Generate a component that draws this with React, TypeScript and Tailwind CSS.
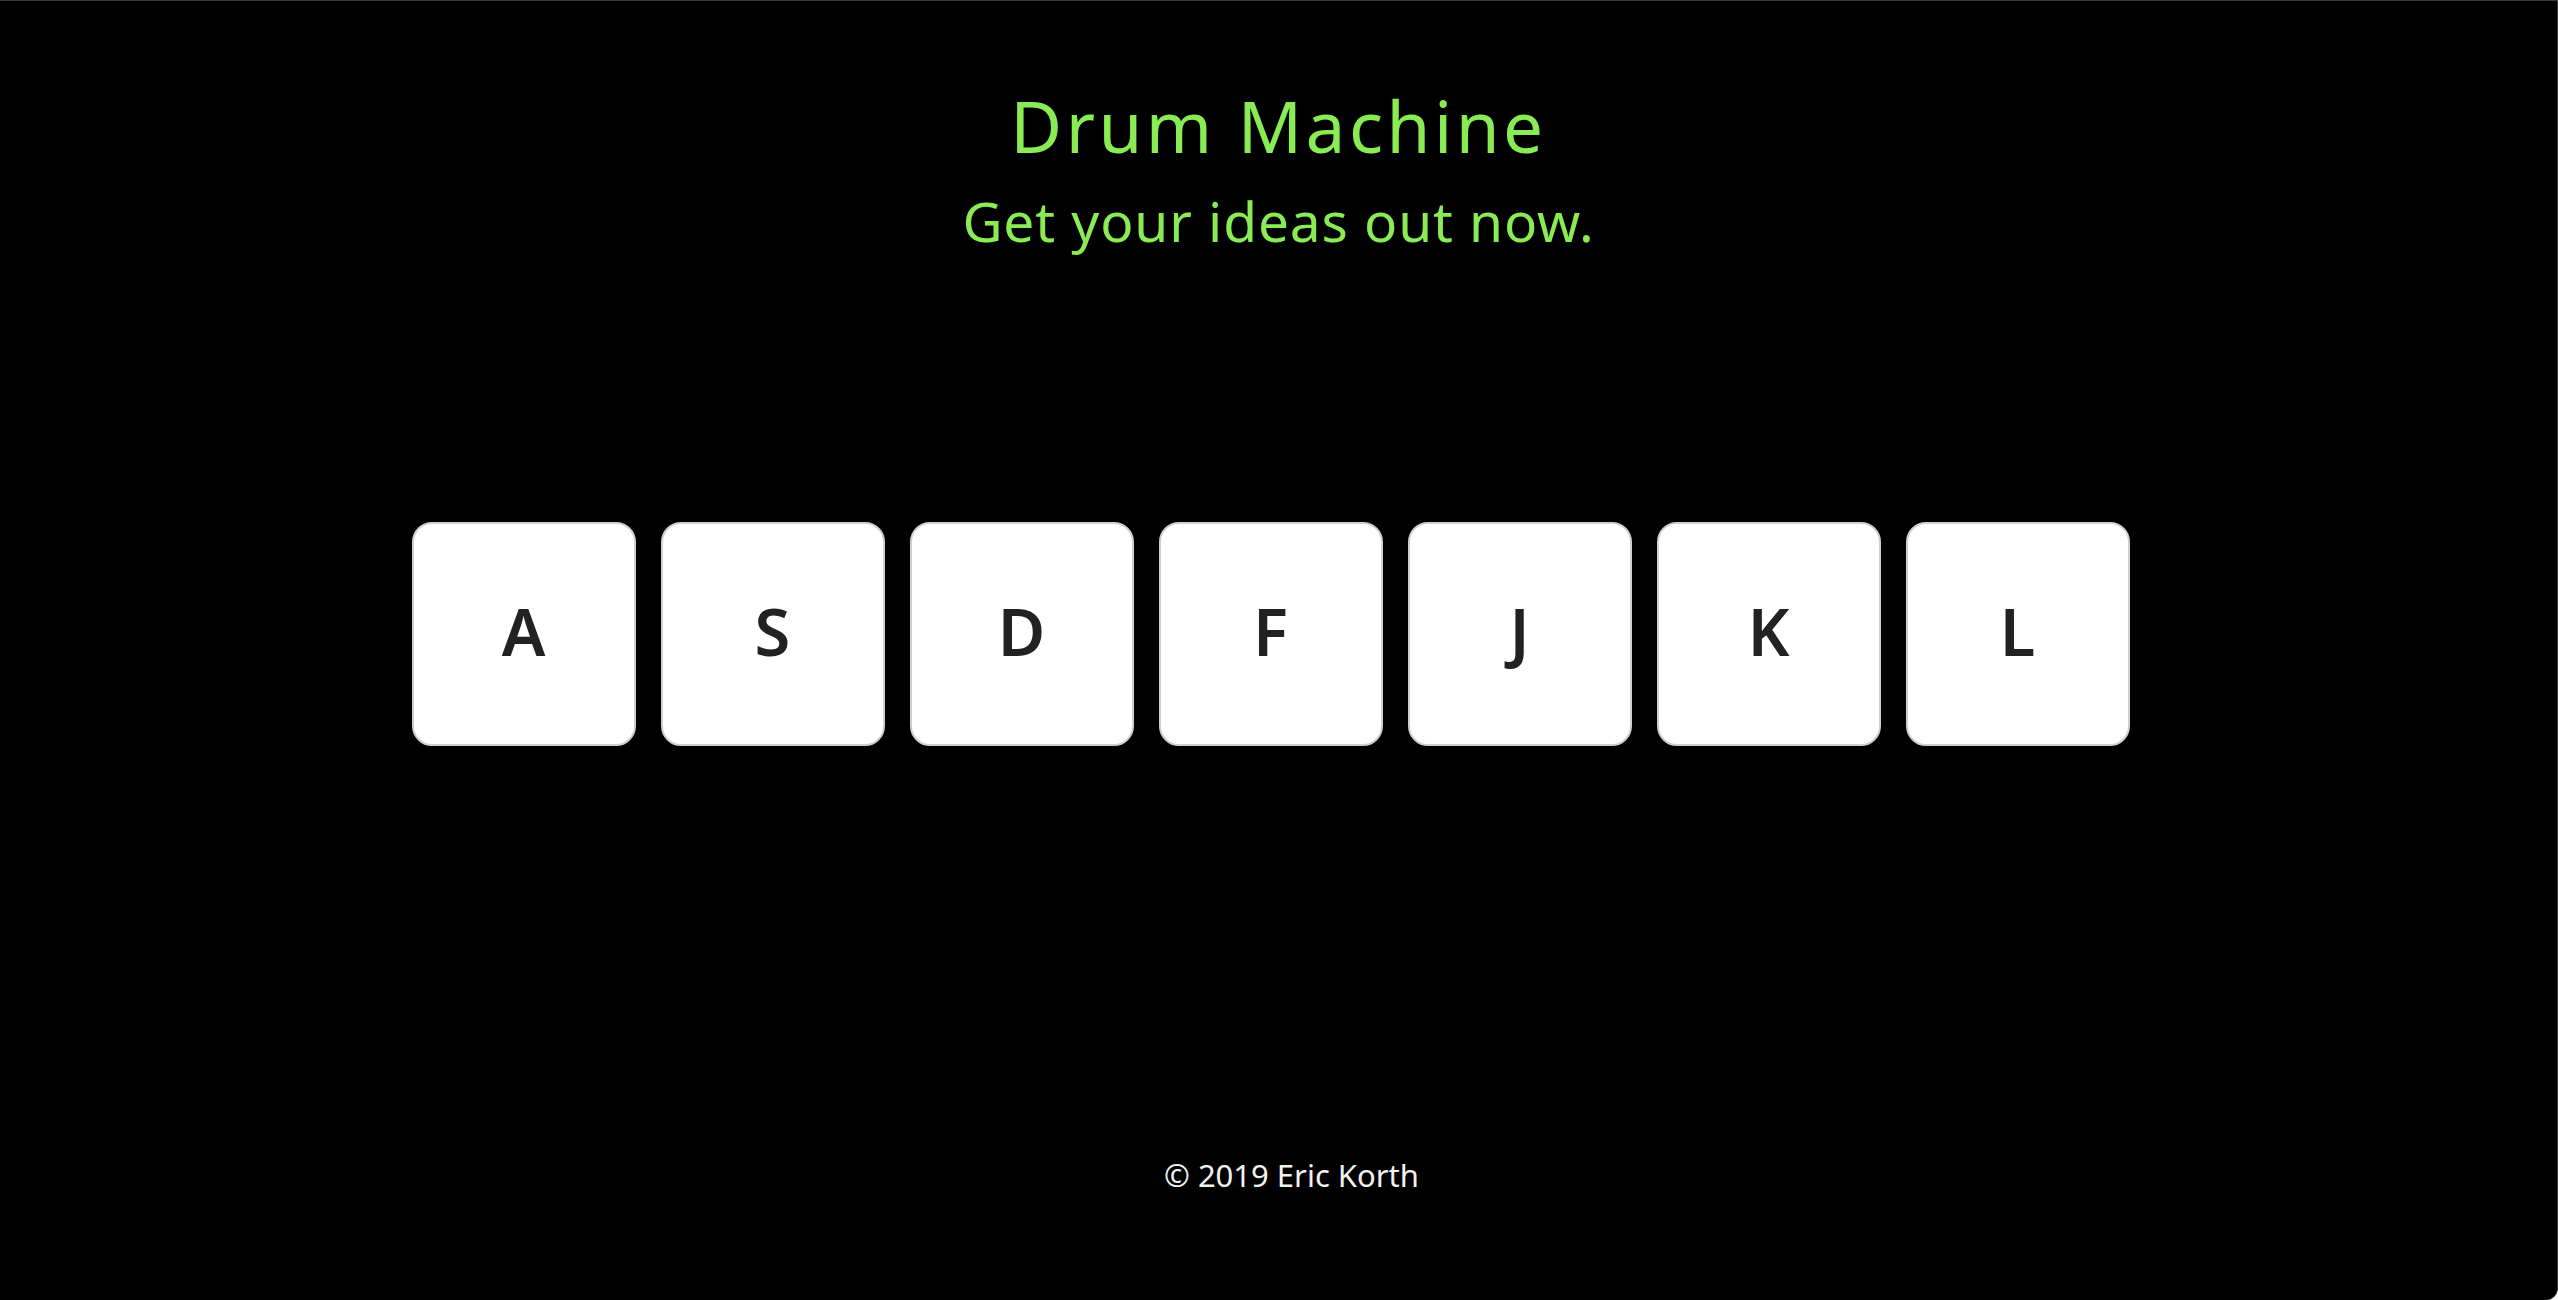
import React from "react";

const KEYS = ["A", "S", "D", "F", "J", "K", "L"];

export default function App() {
  return (
    <div
      className="w-full h-[1300px] bg-black border-t border-r border-[#3a3a3a] rounded-br-[12px] flex flex-col items-center"
      style={{ fontFamily: '"Noto Sans", "Open Sans", sans-serif' }}
    >
      <h1 className="mt-[89px] text-[71px] leading-none tracking-[3.5px] text-[#89ec55] font-normal">Drum Machine</h1>
      <h2 className="mt-[32px] text-[55px] leading-none tracking-[0.9px] text-[#89ec55] font-normal">Get your ideas out now.</h2>
      <div className="mt-[274px] w-full flex justify-center gap-[25px] pr-[16px]">
        {KEYS.map((k) => (
          <div
            key={k}
            className="w-[224px] h-[224px] bg-white rounded-[20px] border-2 border-[#cfcfcf] flex items-center justify-center pb-[6px] text-[65px] leading-none font-semibold text-[#222222]"
          >
            {k}
          </div>
        ))}
      </div>
      <footer className="mt-[414px] text-[31px] leading-none text-[#f2f2f2] ml-[26px]">© 2019 Eric Korth</footer>
    </div>
  );
}
